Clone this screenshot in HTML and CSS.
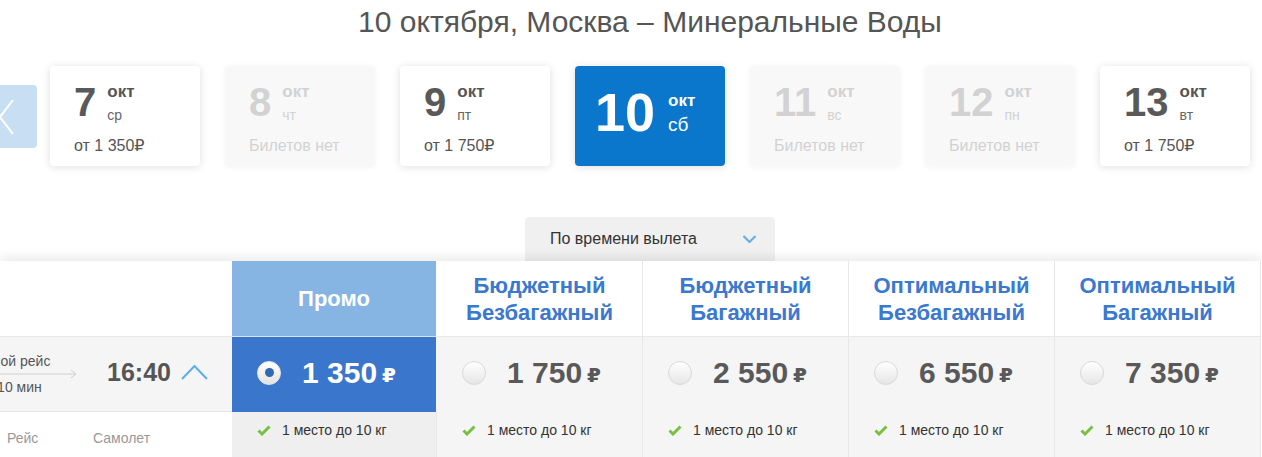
FILE: index.html
```html
<!DOCTYPE html>
<html lang="ru">
<head>
<meta charset="utf-8">
<title>Москва – Минеральные Воды</title>
<link rel="stylesheet" href="styles.css">
</head>
<body>
<div class="page">
  <h1 class="title">10 октября, Москва – Минеральные Воды</h1>

  <div class="dates">
    <button class="nav-prev" aria-label="Назад">
      <svg width="50" height="63" viewBox="0 0 50 63"><polyline points="26,15 13,32 26,49" fill="none" stroke="#fff" stroke-width="2"/></svg>
    </button>
    <div class="days">
      <div class="day">
        <div class="day-top"><span class="day-num">7</span><div class="day-meta"><span class="day-mon">окт</span><span class="day-wd">ср</span></div></div>
        <div class="day-price">от 1 350₽</div>
      </div>
      <div class="day day-off">
        <div class="day-top"><span class="day-num">8</span><div class="day-meta"><span class="day-mon">окт</span><span class="day-wd">чт</span></div></div>
        <div class="day-price">Билетов нет</div>
      </div>
      <div class="day">
        <div class="day-top"><span class="day-num">9</span><div class="day-meta"><span class="day-mon">окт</span><span class="day-wd">пт</span></div></div>
        <div class="day-price">от 1 750₽</div>
      </div>
      <div class="day day-active">
        <div class="day-top"><span class="day-num">10</span><div class="day-meta"><span class="day-mon">окт</span><span class="day-wd">сб</span></div></div>
      </div>
      <div class="day day-off">
        <div class="day-top"><span class="day-num">11</span><div class="day-meta"><span class="day-mon">окт</span><span class="day-wd">вс</span></div></div>
        <div class="day-price">Билетов нет</div>
      </div>
      <div class="day day-off">
        <div class="day-top"><span class="day-num">12</span><div class="day-meta"><span class="day-mon">окт</span><span class="day-wd">пн</span></div></div>
        <div class="day-price">Билетов нет</div>
      </div>
      <div class="day">
        <div class="day-top"><span class="day-num">13</span><div class="day-meta"><span class="day-mon">окт</span><span class="day-wd">вт</span></div></div>
        <div class="day-price">от 1 750₽</div>
      </div>
    </div>
  </div>

  <div class="sort">
    <div class="sort-box">
      <span>По времени вылета</span>
      <svg width="15" height="10" viewBox="0 0 15 10"><polyline points="1.5,2 7.5,8 13.5,2" fill="none" stroke="#6aaee2" stroke-width="2.2"/></svg>
    </div>
  </div>

  <div class="fares">
    <div class="cell lh"></div>
    <div class="cell fh fh-promo">Промо</div>
    <div class="cell fh">Бюджетный<br>Безбагажный</div>
    <div class="cell fh">Бюджетный<br>Багажный</div>
    <div class="cell fh">Оптимальный<br>Безбагажный</div>
    <div class="cell fh">Оптимальный<br>Багажный</div>

    <div class="cell lf">
      <div class="route">
        <span>Прямой рейс</span>
        <svg width="138" height="10" viewBox="0 0 138 10"><line x1="0" y1="5" x2="137" y2="5" stroke="#cfcfcf" stroke-width="1"/><polyline points="132,1 137,5 132,9" fill="none" stroke="#cfcfcf" stroke-width="1"/></svg>
        <span>2 ч 10 мин</span>
      </div>
      <span class="time">16:40</span>
      <svg class="toggle" width="27" height="16" viewBox="0 0 27 16"><polyline points="1,15 13.5,2 26,15" fill="none" stroke="#5eaee8" stroke-width="2"/></svg>
    </div>
    <div class="cell fp fp-sel"><span class="radio radio-on"></span><span class="price">1 350</span><span class="rub">₽</span></div>
    <div class="cell fp"><span class="radio"></span><span class="price">1 750</span><span class="rub">₽</span></div>
    <div class="cell fp"><span class="radio"></span><span class="price">2 550</span><span class="rub">₽</span></div>
    <div class="cell fp"><span class="radio"></span><span class="price">6 550</span><span class="rub">₽</span></div>
    <div class="cell fp"><span class="radio"></span><span class="price">7 350</span><span class="rub">₽</span></div>

    <div class="cell ll"><span class="ll-flight">Рейс</span><span>Самолет</span></div>
    <div class="cell ff ff-promo"><svg width="14" height="11" viewBox="0 0 14 11"><polyline points="1.5,5.5 5,9 12.5,1.5" fill="none" stroke="#78c043" stroke-width="3"/></svg><span>1 место до 10 кг</span></div>
    <div class="cell ff"><svg width="14" height="11" viewBox="0 0 14 11"><polyline points="1.5,5.5 5,9 12.5,1.5" fill="none" stroke="#78c043" stroke-width="3"/></svg><span>1 место до 10 кг</span></div>
    <div class="cell ff"><svg width="14" height="11" viewBox="0 0 14 11"><polyline points="1.5,5.5 5,9 12.5,1.5" fill="none" stroke="#78c043" stroke-width="3"/></svg><span>1 место до 10 кг</span></div>
    <div class="cell ff"><svg width="14" height="11" viewBox="0 0 14 11"><polyline points="1.5,5.5 5,9 12.5,1.5" fill="none" stroke="#78c043" stroke-width="3"/></svg><span>1 место до 10 кг</span></div>
    <div class="cell ff"><svg width="14" height="11" viewBox="0 0 14 11"><polyline points="1.5,5.5 5,9 12.5,1.5" fill="none" stroke="#78c043" stroke-width="3"/></svg><span>1 место до 10 кг</span></div>
  </div>
</div>
</body>
</html>
```

FILE: styles.css
```css
* { box-sizing: border-box; }

html, body {
  margin: 0;
  padding: 0;
  background: #fff;
  overflow: hidden;
}

body {
  font-family: "Liberation Sans", Arial, "DejaVu Sans", sans-serif;
  color: #555;
}

.page {
  width: 1262px;
}

.title {
  margin: 0;
  padding: 4px 0 0 38px;
  font-size: 30px;
  line-height: 36px;
  font-weight: normal;
  color: #555;
  text-align: center;
}

/* date strip */
.dates {
  display: flex;
  align-items: center;
  margin-top: 26px;
}

.nav-prev {
  width: 50px;
  height: 63px;
  margin-left: -13px;
  margin-right: 13px;
  padding: 0;
  border: 0;
  border-radius: 4px;
  background: #c7def3;
  display: flex;
}

.days {
  display: flex;
  gap: 25px;
}

.day {
  width: 150px;
  height: 100px;
  border-radius: 4px;
  background: #fff;
  box-shadow: 0 1px 8px rgba(0, 0, 0, 0.13);
  padding: 14px 0 0 24px;
  display: flex;
  flex-direction: column;
}

.day-top {
  display: flex;
  align-items: flex-start;
  gap: 11px;
  height: 44px;
}

.day-num {
  font-size: 40px;
  line-height: 44px;
  font-weight: bold;
  color: #595959;
}

.day-meta {
  display: flex;
  flex-direction: column;
  padding-top: 2px;
}

.day-mon {
  font-size: 17px;
  font-weight: bold;
  line-height: 20px;
  color: #555;
}

.day-wd {
  font-size: 14px;
  line-height: 20px;
  margin-top: 3px;
  color: #666;
}

.day-price {
  margin-top: 13px;
  font-size: 16px;
  line-height: 18px;
  color: #555;
}

.day-off {
  background: #f8f8f8;
  box-shadow: 0 1px 6px rgba(0, 0, 0, 0.05);
}

.day-off .day-num,
.day-off .day-mon,
.day-off .day-wd,
.day-off .day-price {
  color: #d2d2d2;
}

.day-active {
  background: #0a77cc;
  justify-content: center;
  padding: 0 0 8px 20px;
}

.day-active .day-top {
  height: auto;
  align-items: center;
  gap: 13px;
}

.day-active .day-num {
  font-size: 54px;
  line-height: 60px;
  color: #fff;
}

.day-active .day-mon {
  font-size: 17px;
  color: #fff;
}

.day-active .day-wd {
  font-size: 19px;
  margin-top: 4px;
  color: #fff;
}

/* sort */
.sort {
  display: flex;
  justify-content: center;
  padding-left: 38px;
  margin-top: 51px;
}

.sort-box {
  width: 250px;
  height: 44px;
  background: #f0f0f0;
  border-radius: 4px 4px 0 0;
  display: flex;
  align-items: center;
  justify-content: space-between;
  padding: 0 18px 0 25px;
  font-size: 16px;
  color: #333;
}

/* fares table */
.fares {
  position: relative;
  z-index: 1;
  display: grid;
  grid-template-columns: 232px 205px repeat(4, 206px);
  grid-template-rows: 76px 75px 60px;
  background: #fff;
  box-shadow: 0 -4px 9px rgba(0, 0, 0, 0.08);
}

.cell {
  display: flex;
  align-items: center;
}

.lh {
  border-bottom: 1px solid #e8e8e8;
}

.fh {
  justify-content: center;
  text-align: center;
  border-bottom: 1px solid #e8e8e8;
  border-right: 1px solid #e8e8e8;
  font-size: 22px;
  line-height: 27px;
  font-weight: bold;
  color: #3b78cf;
}

.fh-promo {
  background: #86b5e4;
  color: #fff;
  border-bottom-color: #d6e5f4;
  border-right-color: #fff;
}

.lf {
  background: #f5f5f5;
  border-bottom: 1px solid #e6e6e6;
  overflow: hidden;
  padding-bottom: 3px;
}

.route {
  flex: none;
  width: 138px;
  margin-left: -61px;
  margin-top: 2px;
  display: flex;
  flex-direction: column;
  align-items: center;
  font-size: 14px;
  line-height: 16px;
  color: #555;
}

.time {
  margin-left: 30px;
  font-size: 25px;
  font-weight: bold;
  color: #555;
}

.toggle {
  margin-left: 10px;
  margin-bottom: 2px;
}

.fp {
  background: #f5f5f5;
  border-right: 1px solid #e8e8e8;
  padding: 0 0 4px 25px;
  color: #595959;
}

.fp-sel {
  background: #3a76cb;
  border-right-color: #f5f5f5;
  color: #fff;
}

.radio {
  width: 24px;
  height: 24px;
  border-radius: 50%;
  border: 1px solid #d9d9d9;
  background: linear-gradient(#ffffff, #e6e6e6);
  margin-right: 21px;
  flex: none;
  display: flex;
  align-items: center;
  justify-content: center;
}

.radio-on {
  border-color: #e8e8e8;
  background: linear-gradient(#ffffff, #e3e3e3);
}

.radio-on::after {
  content: "";
  width: 9px;
  height: 9px;
  border-radius: 50%;
  background: #2f68b5;
}

.price {
  font-size: 30px;
  font-weight: bold;
  line-height: 34px;
}

.rub {
  margin-left: 5px;
  margin-top: 5px;
  font-size: 20px;
  font-weight: bold;
}

.ll {
  align-items: flex-start;
  padding: 18px 0 0 7px;
  font-size: 14px;
  line-height: 16px;
  color: #999;
}

.ll-flight {
  width: 86px;
}

.ff {
  align-items: flex-start;
  gap: 11px;
  background: #f5f5f5;
  border-right: 1px solid #e8e8e8;
  padding: 11px 0 0 25px;
  font-size: 14px;
  line-height: 15px;
  color: #333;
}

.ff svg {
  margin-top: 2px;
  flex: none;
}

.ff-promo {
  background: #efefef;
}
```
